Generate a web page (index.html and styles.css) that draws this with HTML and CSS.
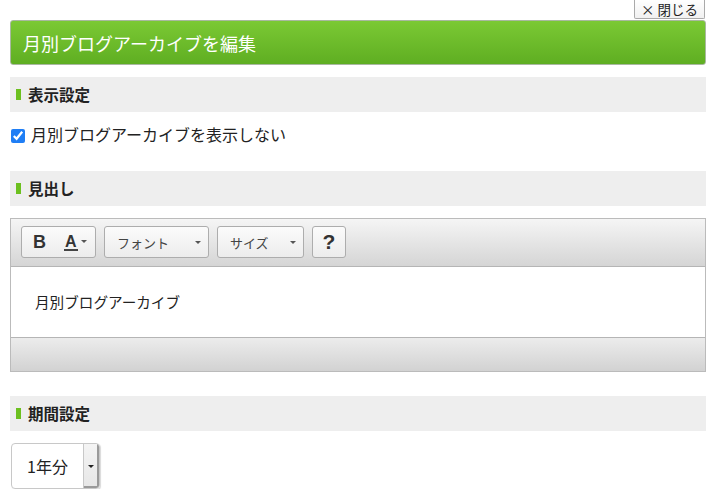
FILE: index.html
```html
<!DOCTYPE html>
<html lang="ja">
<head>
<meta charset="utf-8">
<link rel="stylesheet" href="styles.css">
</head>
<body>
<div class="page">
  <div class="topbar">
    <button class="close-btn">× 閉じる</button>
  </div>
  <h1 class="title">月別ブログアーカイブを編集</h1>

  <section class="section">
    <h2 class="band">表示設定</h2>
    <label class="check-row">
      <input type="checkbox" checked>
      <span>月別ブログアーカイブを表示しない</span>
    </label>
  </section>

  <section class="section">
    <h2 class="band">見出し</h2>
    <div class="editor">
      <div class="toolbar">
        <div class="tbtn group">
          <span class="bold-b">B</span>
          <span class="color-a">A</span><span class="caret small"></span>
        </div>
        <div class="tbtn drop font">フォント<span class="caret"></span></div>
        <div class="tbtn drop size">サイズ<span class="caret"></span></div>
        <div class="tbtn help">?</div>
      </div>
      <div class="content">月別ブログアーカイブ</div>
      <div class="statusbar"></div>
    </div>
  </section>

  <section class="section">
    <h2 class="band">期間設定</h2>
    <div class="select">
      <span class="select-value">1年分</span>
      <span class="select-arrow"><span class="caret dark"></span></span>
    </div>
  </section>
</div>
</body>
</html>
```

FILE: styles.css
```css
* { box-sizing: border-box; }
html, body { margin: 0; padding: 0; background: #fff; }
body {
  font-family: "Noto Sans CJK JP", "Noto Sans", sans-serif;
  color: #222;
  overflow: hidden;
}
.page {
  width: 696px;
  margin-left: 10px;
}
.topbar {
  display: flex;
  justify-content: flex-end;
  height: 20px;
}
.close-btn {
  font-family: "Noto Sans CJK JP", sans-serif;
  font-size: 13.5px;
  line-height: 19px;
  height: 19px;
  margin: 0 1px 0 0;
  padding: 0 6px;
  color: #222;
  background: linear-gradient(#ffffff, #f1f1f1);
  border: 1px solid #aaa;
  border-top: 0;
  border-radius: 0 0 2px 2px;
  white-space: nowrap;
}
.title {
  margin: 0;
  height: 45px;
  padding: 0 12px;
  display: flex;
  align-items: center;
  font-size: 18px;
  font-weight: normal;
  color: #fff;
  background: linear-gradient(#7bc934, #5fae22);
  border: 1px solid #a9b8a0;
  border-radius: 3px;
}
.section { margin-top: 12px; }
.section + .section { margin-top: 24px; }
.band {
  margin: 0 0 12px 0;
  height: 35px;
  display: flex;
  align-items: center;
  padding-left: 6px;
  background: #eeeeee;
  font-size: 15.5px;
  line-height: 1;
  font-weight: bold;
  color: #222;
}
.band::before {
  content: "";
  width: 5px;
  height: 11px;
  background: #6cc01f;
  margin-right: 7px;
}
.check-row {
  display: flex;
  align-items: center;
  height: 23px;
  font-size: 16px;
  line-height: 1;
  color: #222;
}
.check-row span { margin-top: -3px; }
.check-row input {
  width: 14px;
  height: 14px;
  margin: 0 6px 0 1px;
  accent-color: #1f7ef5;
}
.editor {
  border: 1px solid #bbb;
}
.toolbar {
  display: flex;
  gap: 8px;
  height: 48px;
  padding: 7px 10px 0 10px;
  background: linear-gradient(#f5f5f5, #d5d5d5);
  border-bottom: 1px solid #b5b5b5;
}
.tbtn {
  height: 32px;
  display: flex;
  align-items: center;
  background: linear-gradient(#fbfbfb, #ececec);
  border: 1px solid #adadad;
  border-radius: 3px;
  font-size: 13px;
  color: #444;
}
.group {
  width: 75px;
  padding-left: 11px;
}
.bold-b {
  font-family: "Liberation Sans", Arial, sans-serif;
  font-weight: bold;
  font-size: 18px;
  color: #333;
  width: 31px;
}
.color-a {
  font-family: "Liberation Sans", Arial, sans-serif;
  font-weight: bold;
  font-size: 16px;
  color: #333;
  border-bottom: 2px solid #444;
  line-height: 15px;
  padding: 0 1px;
}
.caret {
  display: inline-block;
  width: 0;
  height: 0;
  border-left: 3px solid transparent;
  border-right: 3px solid transparent;
  border-top: 3px solid #555;
}
.caret.small { margin-left: 3px; margin-top: -2px; }
.drop {
  justify-content: space-between;
  padding: 0 7px 0 12px;
}
.font { width: 105px; }
.size { width: 87px; }
.help {
  width: 34px;
  justify-content: center;
  font-family: "Liberation Sans", Arial, sans-serif;
  font-weight: bold;
  font-size: 21px;
  color: #333;
}
.content {
  height: 70px;
  padding: 0 24px 2px 24px;
  display: flex;
  align-items: center;
  font-size: 14.6px;
  color: #222;
  background: #fff;
}
.statusbar {
  height: 34px;
  border-top: 1px solid #b5b5b5;
  background: linear-gradient(#ececec, #d2d2d2);
}
.select {
  width: 89px;
  height: 46px;
  margin-left: 1px;
  display: flex;
  border: 1px solid #c8c8c8;
  border-radius: 4px;
  overflow: hidden;
  box-shadow: 1px 1px 1px rgba(0,0,0,0.15);
}
.select-value {
  flex: 1;
  display: flex;
  align-items: center;
  padding-left: 15px;
  font-size: 16px;
  color: #222;
}
.select-arrow {
  width: 16px;
  display: flex;
  align-items: center;
  justify-content: center;
  background: linear-gradient(#f4f4f4, #e6e6e6);
  border-left: 1px solid #c8c8c8;
  box-shadow: inset -2px -2px 0 #9a9a9a;
}
.caret.dark { border-top-color: #222; margin-right: 1px; }
```
